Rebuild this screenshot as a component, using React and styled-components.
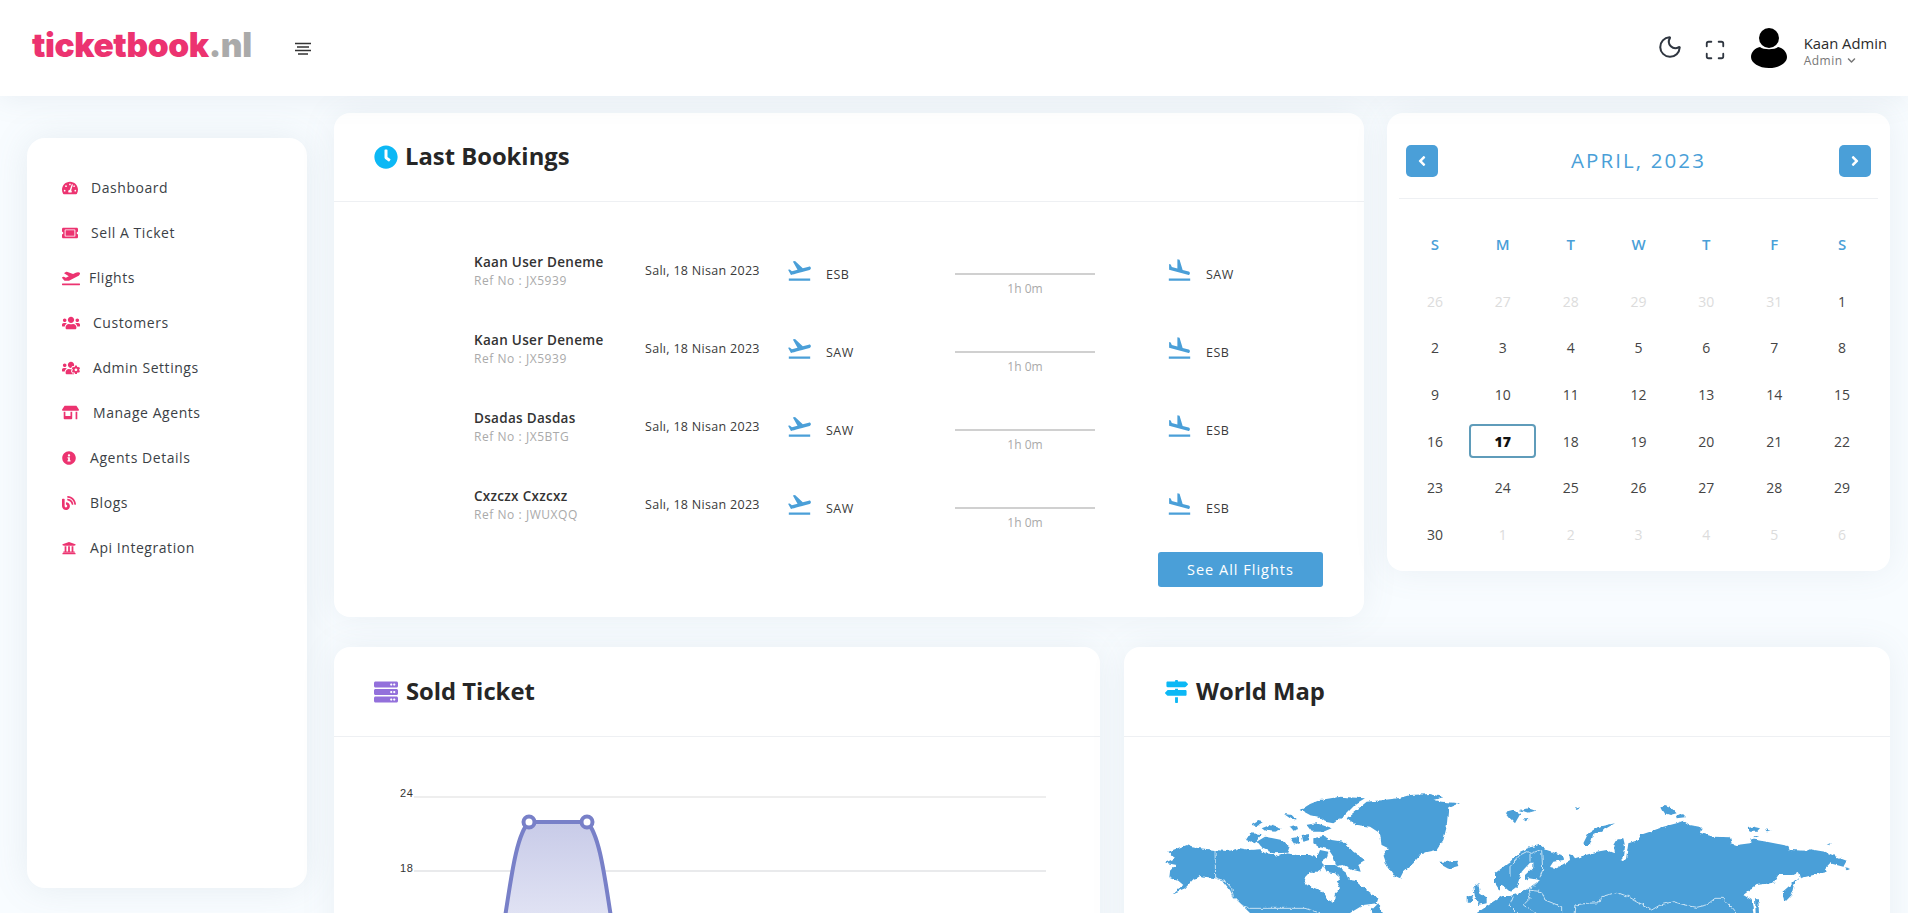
import React from 'react';
import styled, { createGlobalStyle } from 'styled-components';
import {
  FaTachometerAlt, FaTicketAlt, FaPlaneDeparture, FaUsers, FaUsersCog, FaStoreAlt,
  FaInfoCircle, FaBlog, FaUniversity, FaClock, FaServer, FaMapSigns, FaAngleLeft, FaAngleRight, FaChevronDown,
} from 'react-icons/fa';
import { MdFlightTakeoff, MdFlightLand } from 'react-icons/md';
import { Moon, Maximize } from 'lucide-react';

const blue = '#4a9fd8';
const pink = '#ec3370';

const Global = createGlobalStyle`
  html, body {
    margin: 0;
    height: 100%;
    overflow: hidden;
    background: #f8fcff;
    font-family: "Open Sans", "Noto Sans", sans-serif;
    color: #2b2b2b;
  }
  * { box-sizing: border-box; }
`;

const Header = styled.header`
  height: 96px;
  background: #fff;
  display: flex;
  align-items: center;
  padding: 0 21px 0 32px;
  box-shadow: 0 4px 26px rgba(110, 130, 150, 0.1);
  position: relative;
`;

const Logo = styled.div`
  font-family: Inter, sans-serif;
  font-weight: 900;
  font-size: 33.5px;
  letter-spacing: -0.4px;
  color: ${pink};
  line-height: 1;
  margin-top: -4px;
  width: 262px;
  span { color: #aaa; }
`;

const Burger = styled.svg`
  width: 18px;
  height: 14px;
  margin-top: 1px;
`;

const HeaderRight = styled.div`
  margin-left: auto;
  display: flex;
  align-items: center;
`;

const IconButton = styled.div`
  display: flex;
  color: #2f3640;
  margin-right: ${p => p.$mr}px;
  margin-top: ${p => p.$mt}px;
`;

const UserBlock = styled.div`
  margin-top: 5px;
`;

const UserName = styled.div`
  font-size: 14.8px;
  line-height: 20px;
  color: #2b2b2b;
`;

const UserRole = styled.div`
  font-size: 12px;
  line-height: 15px;
  color: #777;
  letter-spacing: 0.5px;
  display: flex;
  align-items: center;
  gap: 4px;
`;

const Layout = styled.div`
  display: flex;
  padding: 17px 18px 0 27px;
`;

const Sidebar = styled.nav`
  width: 280px;
  height: 750px;
  flex: none;
  margin: 25px 27px 0 0;
  padding: 27px 0 0 35px;
  background: #fff;
  border-radius: 18px;
  box-shadow: 0 0 36px rgba(110, 130, 150, 0.13);
`;

const NavItem = styled.div`
  height: 45px;
  display: flex;
  align-items: center;
  gap: ${p => p.$gap}px;
  font-size: 14px;
  letter-spacing: 0.55px;
  color: #3b3f46;
  svg { color: ${pink}; flex: none; }
`;

const Main = styled.main`
  flex: 1;
  min-width: 0;
  display: flex;
  flex-direction: column;
  gap: 30px;
`;

const Row = styled.div`
  display: flex;
  align-items: flex-start;
  gap: ${p => p.$gap}px;
`;

const Card = styled.section`
  width: ${p => p.$w}px;
  flex: none;
  background: #fff;
  border-radius: 16px;
  box-shadow: 0 0 34px rgba(110, 130, 150, 0.1);
`;

const CardHead = styled.div`
  height: ${p => p.$h}px;
  border-bottom: 1px solid #eef0f3;
  display: flex;
  align-items: center;
  padding-left: ${p => p.$pl}px;
  gap: ${p => p.$gap}px;
  svg { flex: none; }
`;

const Title = styled.h2`
  margin: -2px 0 0;
  font-size: 23.8px;
  font-weight: 700;
  color: #262626;
`;

const BookingList = styled.div`
  padding: 33px 41px 30px 140px;
`;

const Booking = styled.div`
  height: 78px;
  display: grid;
  grid-template-columns: 171px 144px 166px 214px 1fr;
  align-items: center;
`;

const Name = styled.div`
  font-size: 13.5px;
  font-weight: 600;
  line-height: 18px;
  color: #333;
  letter-spacing: 0.3px;
  margin-top: -4px;
`;

const Ref = styled.div`
  font-size: 12px;
  line-height: 20px;
  letter-spacing: 0.55px;
  color: #aaa;
`;

const DateText = styled.div`
  font-size: 12.5px;
  letter-spacing: 0.3px;
  color: #3a3a3a;
  margin-top: -7px;
`;

const Stop = styled.div`
  display: flex;
  align-items: center;
  gap: 13px;
  margin-left: -3px;
  font-size: 12.5px;
  letter-spacing: 0.5px;
  color: #3a3a3a;
  svg { color: ${blue}; margin-top: -7px; flex: none; }
`;

const Route = styled.div`
  width: 140px;
  text-align: center;
  font-size: 12px;
  color: #aaa;
  margin-top: 23px;
  line-height: 18px;
  &::before {
    content: '';
    display: block;
    height: 2px;
    background: #d0d0d0;
    margin-bottom: 5px;
  }
`;

const Foot = styled.div`
  display: flex;
  justify-content: flex-end;
  margin-top: 5px;
`;

const Button = styled.button`
  width: 165px;
  height: 35px;
  border: 0;
  border-radius: 3px;
  background: ${blue};
  color: #fff;
  font: 500 14.5px "Open Sans", sans-serif;
  letter-spacing: 1px;
`;

const CalHead = styled.div`
  height: 86px;
  margin: 0 12px;
  padding: 32px 7px 0;
  border-bottom: 1px solid #eef0f3;
  display: flex;
  justify-content: space-between;
`;

const CalButton = styled.button`
  width: 32px;
  height: 32px;
  border: 0;
  padding: 0;
  border-radius: 5px;
  background: ${blue};
  color: #fff;
  display: flex;
  align-items: center;
  justify-content: center;
`;

const CalTitle = styled.div`
  font-size: 20.5px;
  font-weight: 500;
  line-height: 30px;
  letter-spacing: 2.1px;
  color: ${blue};
`;

const CalGrid = styled.div`
  padding: 26px 14px 13px;
  display: grid;
  grid-template-columns: repeat(7, 1fr);
  grid-template-rows: 53px;
  grid-auto-rows: 46.6px;
  text-align: center;
`;

const WeekDay = styled.div`
  height: 38px;
  line-height: 38px;
  font-size: 15px;
  font-weight: 600;
  color: ${blue};
`;

const Day = styled.div`
  display: flex;
  align-items: center;
  justify-content: center;
  font-size: 14px;
  color: ${p => (p.$muted ? '#dcdcdc' : '#444')};
`;

const Today = styled.div`
  width: 67px;
  height: 34px;
  border: 2px solid #5f9cba;
  border-radius: 4px;
  display: flex;
  align-items: center;
  justify-content: center;
  font-weight: 800;
  font-size: 14px;
  color: #111;
`;

const CardBody = styled.div`
  height: 300px;
  padding: ${p => p.$pt}px 0 0 ${p => p.$pl}px;
  svg { display: block; }
`;

const bookings = [
  { name: 'Kaan User Deneme', ref: 'JX5939', from: 'ESB', to: 'SAW' },
  { name: 'Kaan User Deneme', ref: 'JX5939', from: 'SAW', to: 'ESB' },
  { name: 'Dsadas Dasdas', ref: 'JX5BTG', from: 'SAW', to: 'ESB' },
  { name: 'Cxzczx Cxzcxz', ref: 'JWUXQQ', from: 'SAW', to: 'ESB' },
];

const nav = [
  [FaTachometerAlt, 16, 13, 'Dashboard'],
  [FaTicketAlt, 16, 13, 'Sell A Ticket'],
  [FaPlaneDeparture, 18, 9, 'Flights'],
  [FaUsers, 18, 13, 'Customers'],
  [FaUsersCog, 18, 13, 'Admin Settings'],
  [FaStoreAlt, 17, 14, 'Manage Agents'],
  [FaInfoCircle, 14, 14, 'Agents Details'],
  [FaBlog, 14, 14, 'Blogs'],
  [FaUniversity, 14, 14, 'Api Integration'],
];

const prevDays = [26, 27, 28, 29, 30, 31];
const nextDays = [1, 2, 3, 4, 5, 6];
const days = Array.from({ length: 30 }, (_, i) => i + 1);

// map outline, traced at 3x: 0 0 is at the top left of the drawing
const land = [
  'M55 185L108 165L125 172L150 175L195 180L230 183L250 180L270 175L300 180L330 178L345 190L365 192L385 198L410 190L440 195L480 195L500 205L510 180L535 185L530 205L515 215L520 225L555 225L570 235L590 250L600 270L615 272L630 285L660 310L685 325L680 340L640 345L600 369L600 395L300 395L300 369L270 340L250 320L240 300L220 275L195 265L150 258L140 265L130 268L105 295L65 312L100 285L85 272L58 262L60 245L80 225L45 218L75 205Z',
  'M490 145L520 138L545 150L580 155L610 185L645 210L625 222L632 245L610 240L580 225L560 228L550 200L535 178L505 170L490 160Z',
  'M320 155L345 140L395 150L420 175L415 188L370 190L335 175Z',
  'M288 150L300 130L335 132L315 160Z',
  'M305 105L325 93L338 97L320 108Z',
  'M335 115L360 105L395 118L375 125L345 122Z',
  'M402 72L425 75L440 90L420 85Z',
  'M418 110L440 105L445 120L430 125Z',
  'M420 145L450 140L450 160L435 165Z',
  'M455 135L480 132L478 150L460 155Z',
  'M452 60L480 42L510 30L570 20L645 25L620 40L580 80L550 100L525 95L505 80L480 75Z',
  'M470 105L500 100L545 115L520 125L485 125Z',
  'M665 360L685 340L700 369L700 395L670 395Z',
  'M590 85L620 60L650 35L700 30L745 25L780 15L840 12L880 22L850 30L875 35L930 40L895 55L890 110L880 150L860 180L815 190L790 220L760 245L750 265L730 255L710 225L700 195L715 175L695 165L690 130L660 110L620 105Z',
  'M868 215L890 215L920 212L925 228L895 236L875 225Z',
  'M970 290L985 282L990 310L1010 325L1010 340L985 345L975 320Z',
  'M950 320L970 315L965 335L950 335Z',
  'M980 369L1040 330L1060 318L1035 280L1035 250L1080 215L1110 185L1140 172L1170 165L1190 180L1235 195L1240 210L1210 215L1200 230L1220 235L1260 210L1258 192L1268 195L1275 205L1340 185L1370 180L1395 190L1390 165L1400 148L1420 148L1425 170L1422 200L1412 212L1428 208L1435 160L1465 150L1470 135L1500 125L1540 110L1580 100L1600 92L1620 105L1655 112L1650 128L1690 140L1740 142L1745 160L1760 165L1800 160L1805 148L1850 155L1915 168L1920 180L1970 182L1980 178L2025 185L2070 205L2090 212L2080 230L2040 220L2025 235L2030 245L1950 265L1945 248L1930 255L1885 255L1870 278L1820 285L1780 315L1805 330L1810 369L1810 395L980 395Z',
  'M1067 68L1090 62L1112 70L1095 100L1080 85Z',
  'M1108 60L1135 55L1157 62L1135 68Z',
  'M1118 85L1138 85L1130 92Z',
  'M1275 55L1295 52L1280 60Z',
  'M1300 160L1315 130L1345 110L1395 100L1360 120L1330 135L1320 165L1305 165Z',
  'M1532 55L1545 45L1560 50L1580 70L1560 75L1540 68Z',
  'M1578 78L1595 70L1605 82L1580 85Z',
  'M1790 115L1810 110L1830 115L1820 125L1800 125Z',
  'M1845 118L1862 122L1850 124Z',
  'M1810 138L1825 138L1815 142Z',
  'M2030 163L2045 160L2040 166Z',
  'M2085 235L2100 238L2090 241Z',
  'M1898 305L1915 290L1945 260L1930 290L1925 315L1903 338Z',
  'M1815 325L1825 325L1828 395L1818 395Z',
];

const water = [
  'M462 265L480 245L510 245L520 225L530 245L555 250L570 260L560 275L570 295L555 310L552 338L535 330L520 305L495 295L470 285Z',
  'M1150 218L1140 218L1115 245L1100 290L1080 305L1050 280L1050 318L1080 318L1110 310L1135 295L1170 270L1140 265L1125 270L1125 255L1150 232Z',
];

const borders = [
  'M195 180L197 265L225 272L245 295L250 320L275 345L300 355L465 355L510 369L530 395',
  'M1270 395L1275 345L1310 340L1350 338L1355 320L1400 307L1435 320L1470 340L1495 352L1505 360L1530 345L1570 335L1605 345L1640 352L1670 345L1695 325L1720 325L1750 360L1780 395',
  'M1080 260L1080 230L1110 195L1130 185L1145 190L1175 178L1178 240L1170 262',
  'M1140 190L1140 215',
  'M1165 275L1135 300L1175 305L1185 330L1235 350L1235 395',
  'M1090 320L1080 345L1130 395',
  'M1135 300L1140 325L1120 345L1190 395',
];

const Avatar = () => (
  <svg width="36" height="40" viewBox="0 0 36 40">
    <circle cx="18" cy="10" r="10" fill="#000" />
    <path d="M9 19c3 3 15 3 18 0c5 1 9 5 9 10c0 6-8 11-18 11S0 35 0 29c0-5 4-9 9-10z" fill="#000" />
  </svg>
);

const App = () => (
  <>
    <Global />
    <Header>
      <Logo>ticketbook<span>.nl</span></Logo>
      <Burger viewBox="0 0 18 14">
        <path d="M1 1.500h16M3 5h12M1 8.500h16M4 12h10" stroke="#333" strokeWidth="1.500" />
      </Burger>
      <HeaderRight>
        <IconButton $mr={21} $mt={-3}><Moon size={26} strokeWidth={1.9} /></IconButton>
        <IconButton $mr={25} $mt={3}><Maximize size={22} strokeWidth={2} /></IconButton>
        <IconButton $mr={17} $mt={0}><Avatar /></IconButton>
        <UserBlock>
          <UserName>Kaan Admin</UserName>
          <UserRole>Admin <FaChevronDown size={9} /></UserRole>
        </UserBlock>
      </HeaderRight>
    </Header>
    <Layout>
      <Sidebar>
        {nav.map(([Icon, size, gap, label]) => (
          <NavItem key={label} $gap={gap}><Icon size={size} />{label}</NavItem>
        ))}
      </Sidebar>
      <Main>
        <Row $gap={23}>
          <Card $w={1030}>
            <CardHead $h={89} $pl={40} $gap={7}>
              <FaClock size={24} color="#0cb8f5" />
              <Title>Last Bookings</Title>
            </CardHead>
            <BookingList>
              {bookings.map((b, i) => (
                <Booking key={i}>
                  <div>
                    <Name>{b.name}</Name>
                    <Ref>Ref No : {b.ref}</Ref>
                  </div>
                  <DateText>Salı, 18 Nisan 2023</DateText>
                  <Stop><MdFlightTakeoff size={27} />{b.from}</Stop>
                  <Route>1h 0m</Route>
                  <Stop><MdFlightLand size={27} />{b.to}</Stop>
                </Booking>
              ))}
              <Foot><Button>See All Flights</Button></Foot>
            </BookingList>
          </Card>
          <Card $w={503}>
            <CalHead>
              <CalButton><FaAngleLeft size={16} /></CalButton>
              <CalTitle>APRIL, 2023</CalTitle>
              <CalButton><FaAngleRight size={16} /></CalButton>
            </CalHead>
            <CalGrid>
              {['S', 'M', 'T', 'W', 'T', 'F', 'S'].map((d, i) => <WeekDay key={i}>{d}</WeekDay>)}
              {prevDays.map(d => <Day key={`p${d}`} $muted>{d}</Day>)}
              {days.map(d => <Day key={d}>{d === 17 ? <Today>17</Today> : d}</Day>)}
              {nextDays.map(d => <Day key={`n${d}`} $muted>{d}</Day>)}
            </CalGrid>
          </Card>
        </Row>
        <Row $gap={24}>
          <Card $w={766}>
            <CardHead $h={90} $pl={40} $gap={8}>
              <FaServer size={24} color="#9370db" />
              <Title>Sold Ticket</Title>
            </CardHead>
            <CardBody $pt={50} $pl={66}>
              <svg width="650" height="130" viewBox="400 787 650 130">
                <defs>
                  <linearGradient id="area" x1="0" y1="0" x2="0" y2="1">
                    <stop offset="0" stopColor="#c8cbe8" />
                    <stop offset="1" stopColor="#e1e3f4" />
                  </linearGradient>
                </defs>
                <text x="400" y="797" fontFamily="Liberation Sans" fontSize="11" letterSpacing="0.6" fill="#333">24</text>
                <text x="400" y="872" fontFamily="Liberation Sans" fontSize="11" letterSpacing="0.6" fill="#333">18</text>
                <path d="M414 797H1046" stroke="#eee" strokeWidth="2" />
                <path d="M414 871H1046" stroke="#e2e3e6" strokeWidth="1.500" />
                <path d="M505 917C511 880 516 835 529 822H587C600 835 605 880 611 917Z" fill="url(#area)" />
                <path d="M505 917C511 880 516 835 529 822H587C600 835 605 880 611 917" fill="none" stroke="#7880c8" strokeWidth="4" />
                <circle cx="529" cy="822" r="5.500" fill="#fff" stroke="#7880c8" strokeWidth="4" />
                <circle cx="587" cy="822" r="5.500" fill="#fff" stroke="#7880c8" strokeWidth="4" />
              </svg>
            </CardBody>
          </Card>
          <Card $w={766}>
            <CardHead $h={90} $pl={41} $gap={8}>
              <FaMapSigns size={23} color="#0cb8f5" />
              <Title>World Map</Title>
            </CardHead>
            <CardBody $pt={53} $pl={26}>
              <svg width="730" height="130" viewBox="0 0 2190 390">
                <defs>
                  {/* roughens the straight traced edges into a coastline */}
                  <filter id="coast" x="-2%" y="-5%" width="104%" height="110%" colorInterpolationFilters="sRGB">
                    <feTurbulence type="fractalNoise" baseFrequency="0.07" numOctaves="2" seed="4" />
                    <feDisplacementMap in="SourceGraphic" scale="11" xChannelSelector="R" yChannelSelector="G" />
                  </filter>
                </defs>
                <g filter="url(#coast)">
                  {land.map((d, i) => <path key={i} d={d} fill={blue} />)}
                  {water.map((d, i) => <path key={i} d={d} fill="#fff" />)}
                  {borders.map((d, i) => <path key={i} d={d} fill="none" stroke="#fff" strokeWidth="2.500" opacity="0.85" />)}
                </g>
              </svg>
            </CardBody>
          </Card>
        </Row>
      </Main>
    </Layout>
  </>
);

export default App;
